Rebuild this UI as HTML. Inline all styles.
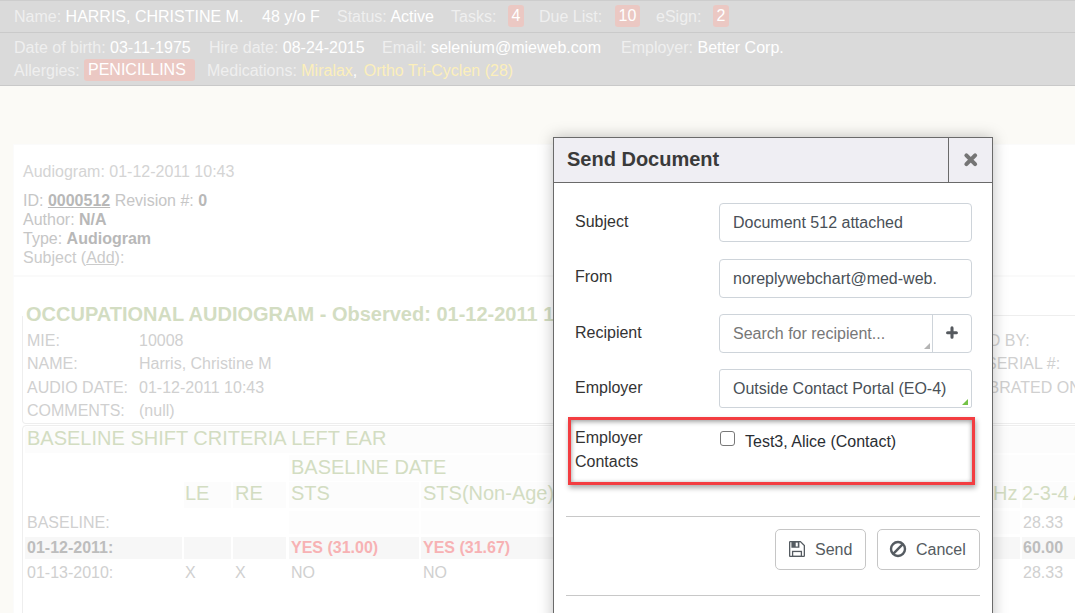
<!DOCTYPE html>
<html><head><meta charset="utf-8">
<style>
*{box-sizing:border-box;margin:0;padding:0}
html,body{width:1075px;height:613px;overflow:hidden;background:#fbfaf6;font-family:"Liberation Sans",sans-serif;font-size:16px;position:relative}
.a{position:absolute;white-space:nowrap;line-height:1}
/* header */
#hdr{position:absolute;left:0;top:0;width:1075px;height:86px;background:#dadada;border-top:1px solid #cdcdcd}
#hsep{position:absolute;left:0;top:32px;width:1075px;height:1px;background:#cacaca}
#hbot{position:absolute;left:0;top:85px;width:1075px;height:1px;background:#c9c9c9}
.hl{color:#efefef}
.hv{color:#ffffff}
.badge{position:absolute;background:#ebc8c3;border-radius:3px;color:#fff;text-align:center;line-height:22px;height:22px}
.med{color:#fcefbb}
/* page */
.panel{position:absolute;background:#fff}
.g{color:#d0d0d0}
.gb{color:#bdbdbd;font-weight:bold}
.grn{color:#d3ddc2}
.tc{position:absolute;background:#fcfcfc}
/* modal */
#modal{position:absolute;left:553px;top:137px;width:440px;height:490px;background:#fff;border:1px solid #6a6a6a;box-shadow:0 0 14px rgba(0,0,0,0.25)}
#mhead{position:absolute;left:554px;top:138px;width:438px;height:45px;background:#efeef3;border-bottom:1px solid #6a6a6a}
#mclose{position:absolute;left:948px;top:138px;width:1px;height:45px;background:#6a6a6a}
.lab{position:absolute;color:#333;font-size:16px;line-height:16px;white-space:nowrap}
.inp{position:absolute;border:1px solid #ced4da;border-radius:4px;background:#fff}
.itx{position:absolute;color:#495057;font-size:16px;line-height:16px;white-space:nowrap}
.btn{position:absolute;border:1px solid #c6c6c6;border-radius:5px;background:#fff;color:#555b61}
</style></head><body>
<div id="hdr"></div>
<div id="hsep"></div>
<div id="hbot"></div>
<!-- header row 1 -->
<div class="a hl" style="left:14px;top:9px">Name: <span class="hv">HARRIS, CHRISTINE M.</span></div>
<div class="a hv" style="left:262px;top:9px">48 y/o F</div>
<div class="a hl" style="left:337px;top:9px">Status: <span class="hv">Active</span></div>
<div class="a hl" style="left:451px;top:9px">Tasks:</div>
<div class="badge" style="left:508px;top:5px;width:16px">4</div>
<div class="a hl" style="left:539px;top:9px">Due List:</div>
<div class="badge" style="left:615px;top:5px;width:25px">10</div>
<div class="a hl" style="left:656px;top:9px">eSign:</div>
<div class="badge" style="left:713px;top:5px;width:16px">2</div>
<!-- header row 2 -->
<div class="a hl" style="left:14px;top:40px">Date of birth: <span class="hv">03-11-1975</span></div>
<div class="a hl" style="left:209px;top:40px">Hire date: <span class="hv">08-24-2015</span></div>
<div class="a hl" style="left:382px;top:40px">Email: <span class="hv">selenium@mieweb.com</span></div>
<div class="a hl" style="left:621px;top:40px">Employer: <span class="hv">Better Corp.</span></div>
<div class="a hl" style="left:14px;top:63px">Allergies:</div>
<div class="badge" style="left:84px;top:59px;width:111px;height:22px;line-height:22px;text-align:left;padding-left:4px">PENICILLINS</div>
<div class="a hl" style="left:207px;top:63px">Medications: <span class="med">Miralax</span><span class="hv">,</span> <span class="med" style="margin-left:2px">Ortho Tri-Cyclen (28)</span></div>

<!-- page panel 1 -->
<div class="panel" style="left:13px;top:144px;width:1062px;height:131px;border-left:1px solid #fbfbfb;border-top:1px solid #fbfbfb"></div><div class="panel" style="left:13px;top:275px;width:1062px;height:2px;background:#fafafa"></div>
<div class="a g" style="left:23px;top:164px;color:#d4d4d4">Audiogram: 01-12-2011 10:43</div>
<div class="a g" style="left:23px;top:193px;color:#c6c6c6">ID: <b style="color:#b8b8b8;text-decoration:underline">0000512</b> Revision #: <b style="color:#b8b8b8">0</b></div>
<div class="a g" style="left:23px;top:212px;color:#c6c6c6">Author: <b style="color:#b8b8b8">N/A</b></div>
<div class="a g" style="left:23px;top:231px;color:#c6c6c6">Type: <b style="color:#b8b8b8">Audiogram</b></div>
<div class="a g" style="left:23px;top:250px;color:#cbcbcb">Subject (<u>Add</u>):</div>

<!-- page panel 2 -->
<div class="panel" style="left:13px;top:277px;width:1062px;height:340px;border-left:1px solid #fbfbfb"></div>
<div class="a grn" style="left:26px;top:304px;font-size:20px;font-weight:bold">OCCUPATIONAL AUDIOGRAM - Observed: 01-12-2011 10:43</div>
<div style="position:absolute;left:22px;top:316px;width:1100px;height:108px;border:1px solid #eeeeee;border-top:none;border-radius:0 0 4px 4px"></div><div style="position:absolute;left:560px;top:315px;width:600px;height:1px;background:#eeeeee"></div>
<div class="a g" style="left:27px;top:332.5px">MIE:</div>
<div class="a g" style="left:139px;top:332.5px">10008</div>
<div class="a g" style="left:27px;top:356px">NAME:</div>
<div class="a g" style="left:139px;top:356px">Harris, Christine M</div>
<div class="a g" style="left:27px;top:379.5px">AUDIO DATE:</div>
<div class="a g" style="left:139px;top:379.5px">01-12-2011 10:43</div>
<div class="a g" style="left:27px;top:403px">COMMENTS:</div>
<div class="a g" style="left:139px;top:403px">(null)</div>
<div class="a g" style="left:915px;top:332.5px">REVIEWED BY:</div>
<div class="a g" style="left:986px;top:356px">SERIAL #:</div>
<div class="a g" style="left:953px;top:379.5px">CALIBRATED ON:</div>

<div style="position:absolute;left:22px;top:425px;width:1100px;height:300px;border:1px solid #eeeeee;border-radius:4px"></div>
<div class="tc" style="left:25px;top:427px;width:1060px;height:26px"></div>
<div class="a grn" style="left:27px;top:428px;font-size:20px">BASELINE SHIFT CRITERIA LEFT EAR</div>
<div class="tc" style="left:289px;top:455px;width:800px;height:26px;background:#fdfdfd"></div>
<div class="a grn" style="left:291px;top:456.5px;font-size:20px">BASELINE DATE</div>
<div class="tc" style="left:184px;top:482px;width:47px;height:26px"></div>
<div class="tc" style="left:233px;top:482px;width:53px;height:26px"></div>
<div class="tc" style="left:289px;top:482px;width:130px;height:26px"></div>
<div class="tc" style="left:421px;top:482px;width:599px;height:26px"></div>
<div class="tc" style="left:1022px;top:482px;width:60px;height:26px"></div>
<div class="a grn" style="left:185px;top:483px;font-size:20px">LE</div>
<div class="a grn" style="left:235px;top:483px;font-size:20px">RE</div>
<div class="a grn" style="left:291px;top:483px;font-size:20px">STS</div>
<div class="a grn" style="left:423px;top:483px;font-size:20px">STS(Non-Age)</div>
<div class="a grn" style="left:993px;top:483px;font-size:20px">Hz</div>
<div class="a grn" style="left:1022px;top:483px;font-size:20px">2-3-4 Avg</div>
<div class="tc" style="left:289px;top:511px;width:130px;height:23px;background:#fdfdfd"></div>
<div class="tc" style="left:421px;top:511px;width:599px;height:23px;background:#fdfdfd"></div>
<div class="a g" style="left:27px;top:515px">BASELINE:</div>
<div class="a g" style="left:1023px;top:515px">28.33</div>
<div class="tc" style="left:25px;top:537px;width:157px;height:22px;background:#f7f7f7"></div>
<div class="tc" style="left:184px;top:537px;width:47px;height:22px;background:#f7f7f7"></div>
<div class="tc" style="left:233px;top:537px;width:53px;height:22px;background:#f7f7f7"></div>
<div class="tc" style="left:289px;top:537px;width:130px;height:22px;background:#f7f7f7"></div>
<div class="tc" style="left:421px;top:537px;width:599px;height:22px;background:#f7f7f7"></div>
<div class="tc" style="left:1022px;top:537px;width:60px;height:22px;background:#f7f7f7"></div>
<div class="a gb" style="left:27px;top:540px">01-12-2011:</div>
<div class="a" style="left:291px;top:540px;font-weight:bold;color:#f7b2b4">YES (31.00)</div>
<div class="a" style="left:423px;top:540px;font-weight:bold;color:#f7b2b4">YES (31.67)</div>
<div class="a gb" style="left:1023px;top:540px">60.00</div>
<div class="a g" style="left:27px;top:564.5px">01-13-2010:</div>
<div class="a g" style="left:185px;top:564.5px">X</div>
<div class="a g" style="left:235px;top:564.5px">X</div>
<div class="a g" style="left:291px;top:564.5px">NO</div>
<div class="a g" style="left:423px;top:564.5px">NO</div>
<div class="a g" style="left:1023px;top:564.5px">28.33</div>

<!-- modal -->
<div id="modal"></div>
<div id="mhead"></div>
<div id="mclose"></div>
<div class="a" style="left:567px;top:149px;font-size:20px;font-weight:bold;color:#3a3a3a">Send Document</div>
<svg style="position:absolute;left:958px;top:148px" width="26" height="24" viewBox="958 148 26 24"><path d="M966.4 155.4 L975.1 164.1 M975.1 155.4 L966.4 164.1" stroke="#757575" stroke-width="4.1" stroke-linecap="round"/></svg>

<div class="lab" style="left:575px;top:214px">Subject</div>
<div class="inp" style="left:719px;top:203px;width:253px;height:39px"></div>
<div class="itx" style="left:733px;top:215px">Document 512 attached</div>

<div class="lab" style="left:575px;top:269px">From</div>
<div class="inp" style="left:719px;top:259px;width:253px;height:39px"></div>
<div class="itx" style="left:733px;top:271px">noreplywebchart@med-web.</div>

<div class="lab" style="left:575px;top:325px">Recipient</div>
<div class="inp" style="left:719px;top:314px;width:253px;height:39px"></div>
<div style="position:absolute;left:932px;top:314px;width:1px;height:39px;background:#ced4da"></div>
<div class="itx" style="left:733px;top:326px;color:#777">Search for recipient...</div>

<div class="lab" style="left:575px;top:380px">Employer</div>
<div class="inp" style="left:719px;top:369px;width:253px;height:39px;border-radius:3px 3px 2px 3px"></div>
<div class="itx" style="left:733px;top:381px">Outside Contact Portal (EO-4)</div>

<div style="position:absolute;left:568px;top:417px;width:407px;height:68px;border:3px solid #f33d41;box-shadow:1px 3px 5px rgba(0,0,0,0.32), inset 0 2px 5px rgba(0,0,0,0.3), inset 0 0 4px rgba(0,0,0,0.15)"></div>
<div class="lab" style="left:575px;top:430px">Employer</div>
<div class="lab" style="left:575px;top:454px">Contacts</div>
<div style="position:absolute;left:720px;top:431px;width:15px;height:15px;border:1px solid #787878;border-radius:3px"></div>
<div class="itx" style="left:745px;top:434px;color:#2a2e33">Test3, Alice (Contact)</div>

<div style="position:absolute;left:566px;top:516px;width:414px;height:1px;background:#c8c8c8"></div>
<div class="btn" style="left:775px;top:529px;width:91px;height:41px"></div>
<div class="itx" style="left:815px;top:542px;color:#555b61">Send</div>
<div class="btn" style="left:877px;top:529px;width:103px;height:41px"></div>
<div class="itx" style="left:916px;top:542px;color:#555b61">Cancel</div>
<div style="position:absolute;left:566px;top:595px;width:414px;height:1px;background:#c8c8c8"></div>
<svg style="position:absolute;left:924px;top:343px" width="6" height="6" viewBox="0 0 6 6"><path d="M6 0 L6 6 L0 6 Z" fill="#b4b4b4"/></svg>
<svg style="position:absolute;left:945px;top:326px" width="14" height="14" viewBox="0 0 14 14"><path d="M2.6 6.7 H11.4 M7 1.9 V11.3" stroke="#55595e" stroke-width="3.1" stroke-linecap="round"/></svg>
<svg style="position:absolute;left:962px;top:399px" width="6" height="6" viewBox="0 0 6 6"><path d="M6 0 L6 6 L0 6 Z" fill="#74c247"/></svg>
<svg style="position:absolute;left:789px;top:541px" width="16" height="16" viewBox="0 0 16 16"><path d="M1.3 0.65 H11.4 L15.35 4.6 V14.7 Q15.35 15.35 14.7 15.35 H1.3 Q0.65 15.35 0.65 14.7 V1.3 Q0.65 0.65 1.3 0.65 Z" fill="none" stroke="#555b61" stroke-width="1.3"/><path d="M2.4 0.6 H10.4 V6.7 H2.4 Z M6.7 1.6 V5.5 H8.8 V1.6 Z" fill="#555b61" fill-rule="evenodd"/><rect x="3.6" y="10.45" width="8.8" height="5" fill="none" stroke="#555b61" stroke-width="1.3"/></svg>
<svg style="position:absolute;left:889px;top:540px" width="18" height="18" viewBox="0 0 18 18"><circle cx="9" cy="9" r="7" fill="none" stroke="#555b61" stroke-width="2.4"/><path d="M13.6 4.4 L4.4 13.6" stroke="#555b61" stroke-width="2.4"/></svg>
</body></html>
